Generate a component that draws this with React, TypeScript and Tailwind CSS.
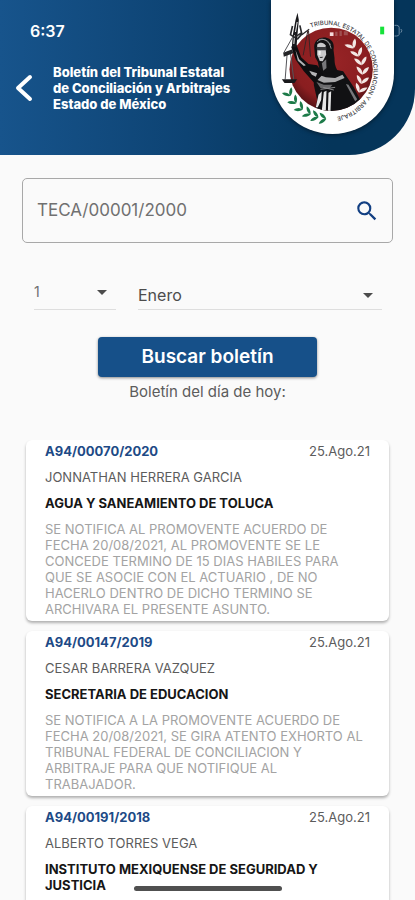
import React from 'react';
import { MdArrowDropDown, MdSearch } from 'react-icons/md';

type Notice = {
  file: string;
  date: string;
  person: string;
  entity: string;
  detail?: string;
};

const notices: Notice[] = [
  {
    file: 'A94/00070/2020',
    date: '25.Ago.21',
    person: 'JONNATHAN HERRERA GARCIA',
    entity: 'AGUA Y SANEAMIENTO DE TOLUCA',
    detail:
      'SE NOTIFICA AL PROMOVENTE ACUERDO DE FECHA 20/08/2021, AL PROMOVENTE SE LE CONCEDE TERMINO DE 15 DIAS HABILES PARA QUE SE ASOCIE CON EL ACTUARIO , DE NO HACERLO DENTRO DE DICHO TERMINO SE ARCHIVARA EL PRESENTE ASUNTO.',
  },
  {
    file: 'A94/00147/2019',
    date: '25.Ago.21',
    person: 'CESAR BARRERA VAZQUEZ',
    entity: 'SECRETARIA DE EDUCACION',
    detail:
      'SE NOTIFICA A LA PROMOVENTE ACUERDO DE FECHA 20/08/2021, SE GIRA ATENTO EXHORTO AL TRIBUNAL FEDERAL DE CONCILIACION Y ARBITRAJE PARA QUE NOTIFIQUE AL TRABAJADOR.',
  },
  {
    file: 'A94/00191/2018',
    date: '25.Ago.21',
    person: 'ALBERTO TORRES VEGA',
    entity: 'INSTITUTO MEXIQUENSE DE SEGURIDAD Y JUSTICIA',
  },
];

const months = ['Enero', 'Febrero', 'Marzo', 'Abril', 'Mayo', 'Junio', 'Julio', 'Agosto', 'Septiembre', 'Octubre', 'Noviembre', 'Diciembre'];
const days = Array.from({ length: 31 }, (_, i) => String(i + 1));

// One pair of laurel leaves around a stem point, growing along `turn` degrees.
function LeafPair({ x, y, turn, size = 1 }: { x: number; y: number; turn: number; size?: number }) {
  return (
    <g transform={`translate(${x} ${y}) rotate(${turn}) scale(${size})`}>
      <path d="M0 2C-2-7-10-14-19-15C-18-5-10 4 0 8Z" />
      <path d="M0 2C2-7 9-14 18-16C18-5 10 4 0 8Z" />
    </g>
  );
}

function Emblem() {
  return (
    <svg viewBox="48 0 368 402" className="h-full w-full overflow-visible" role="img" aria-label="Tribunal Estatal de Conciliación y Arbitraje">
      <defs>
        <path id="ring" d="M167 83A140 140 0 1 1 227 354" />
        <radialGradient id="disc" cx="0.5" cy="0.4" r="0.6">
          <stop offset="0" stopColor="#982426" />
          <stop offset="0.75" stopColor="#8a1e20" />
          <stop offset="1" stopColor="#541215" />
        </radialGradient>
        <clipPath id="discClip">
          <circle cx="228" cy="208" r="125" />
        </clipPath>
      </defs>
      <circle cx="228" cy="208" r="125" fill="url(#disc)" />
      <text fill="#3b3b3f" fontSize="18" fontFamily="Inter, sans-serif" fontWeight="500">
        <textPath href="#ring">TRIBUNAL ESTATAL DE CONCILIACION Y ARBITRAJE</textPath>
      </text>

      {/* torso and robe */}
      <g clipPath="url(#discClip)">
        <path d="M176 218L205 205L235 208L264 214L280 238L296 262L318 306L290 325L250 345H178L186 300L176 255Z" fill="#111113" />
        <path d="M184 222L212 232L240 234L262 224L268 234L240 246L206 248L182 238Z" fill="#a9a9ab" />
        <path d="M184 246L206 254L232 254L222 266L196 264Z" fill="#6a6a6c" />
        <path d="M190 284L200 274L198 300L188 322H182ZM206 276L214 272L212 330H200ZM220 278L228 274L226 335L218 340Z" fill="#e6e6e6" />
        <path d="M272 252L280 254L306 298L300 304Z" fill="#77777a" />
        <path d="M196 268L240 262M204 262L236 270" stroke="#8a8a8c" strokeWidth="3" />
      </g>
      {/* raised arm */}
      <path d="M108 140L124 134L138 172L160 192L186 196L204 222L178 250L146 214L122 180Z" fill="#0e0e10" />
      <path d="M121 150L132 178L152 196L146 198L128 182ZM162 212L186 220L182 230L170 224Z" fill="#b5b5b7" />
      {/* head and blindfold */}
      <path d="M177 140C178 118 198 109 216 114C234 120 238 134 235 150L238 174C238 190 240 198 246 210L216 220L192 208L188 186L180 172Z" fill="#111113" />
      <path d="M186 134C192 126 206 126 211 136L213 164L203 184L194 183L186 164Z" fill="#c9c9cb" />
      <path d="M184 141L213 141L214 151L186 151Z" fill="#3a3a3d" />
      <path d="M190 152L197 153L196 166L190 164Z" fill="#f1f1f1" />
      <path d="M193 171L204 170L201 174L195 174Z" fill="#3a3a3d" />
      <path d="M200 190L213 178L214 204L204 212Z" fill="#77777a" />
      <path d="M186 126C196 114 216 116 226 134M192 119C206 114 222 122 228 146" fill="none" stroke="#8f8f91" strokeWidth="3" />

      {/* sword and scales */}
      <path d="M127 38L131 60L127 104L124 142L110 142L113 104L121 60Z" fill="#19191c" />
      <path d="M126 66L121 96M118 106L116 132" stroke="#f4f4f4" strokeWidth="3" />
      <path d="M112 78L106 104L118 112L140 98M134 76L140 102L126 118" fill="none" stroke="#29292c" strokeWidth="5" />
      <path d="M140 104L162 88" stroke="#29292c" strokeWidth="4" />
      <path d="M112 112L86 158M96 160L90 238M106 160L116 240" fill="none" stroke="#55555a" strokeWidth="3" />
      <path d="M84 158L112 148L114 160L86 170Z" fill="#242427" />
      <path d="M160 92L166 170M158 92L144 166" fill="none" stroke="#3b2325" strokeWidth="3" />
      <path d="M80 238H126L118 249H88Z" fill="#19191c" />

      {/* laurel branches */}
      <g fill="#f3e8e4">
        <LeafPair x={292} y={138} turn={-30} />
        <LeafPair x={308} y={162} turn={-20} />
        <LeafPair x={318} y={188} turn={-8} />
        <LeafPair x={322} y={216} turn={4} />
        <LeafPair x={320} y={244} turn={14} />
        <LeafPair x={314} y={270} turn={24} />
      </g>
      <g fill="#1c7a48">
        <LeafPair x={102} y={282} turn={-30} size={0.9} />
        <LeafPair x={118} y={305} turn={-42} size={0.9} />
        <LeafPair x={137} y={325} turn={-52} size={0.9} />
        <LeafPair x={160} y={340} turn={-62} size={0.9} />
        <LeafPair x={183} y={350} turn={-74} size={0.9} />
        <LeafPair x={206} y={356} turn={-84} size={0.9} />
      </g>

      {/* signal and battery of the status bar */}
      <path d="M224 97H235V108H224Z" fill="#f6dada" />
      <path d="M240 95H247V108H240ZM253 92H260V108H253ZM266 94H278V106H266Z" fill="#b98a8a" opacity="0.45" />
      <rect x="375" y="80" width="12" height="23" fill="#16e23a" />
      <path d="M418 76H424Q431 76 432 82V103Q431 108 424 108H418M437 87Q443 92 437 98" fill="none" stroke="#6d8ba3" strokeWidth="3" />
    </svg>
  );
}

function NoticeCard({ notice, last }: { notice: Notice; last: boolean }) {
  return (
    <article
      className={`flex flex-col gap-[10px] rounded-md bg-white px-[19px] pt-[3px] pb-1 text-[13px] leading-4 shadow-[0_2px_3px_rgba(0,0,0,0.3)] ${last ? 'grow rounded-b-none' : 'shrink-0'}`}
    >
      <div className="flex justify-between">
        <h2 className="font-bold text-[#1d4a86]">{notice.file}</h2>
        <time className="text-[#5c5c5c]">{notice.date}</time>
      </div>
      <p className="text-[#5c5c5c]">{notice.person}</p>
      <p className="font-bold text-[#161616]">{notice.entity}</p>
      {notice.detail && <p className="pr-1 text-[#a3a3a3]">{notice.detail}</p>}
    </article>
  );
}

export default function App() {
  return (
    <div className="relative flex h-screen flex-col overflow-hidden bg-[#fafafa] font-[Inter,'Liberation_Sans',sans-serif]">
      <header className="flex h-[155px] shrink-0 justify-between rounded-br-[66px] bg-linear-to-r from-[#17548c] via-[#0d4373] via-45% to-[#05355a] to-80% pr-[21px] text-white">
        <div className="flex flex-col pt-[21px]">
          <time className="pl-[30px] text-base leading-5 font-semibold">6:37</time>
          <div className="flex items-center pt-[23px]">
            <button type="button" aria-label="Regresar" className="flex w-[53px] pl-[15px]">
              <svg viewBox="0 0 18 28" className="h-7 w-[18px]" fill="none" stroke="currentColor" strokeWidth="4" strokeLinecap="round" strokeLinejoin="round">
                <path d="M15 3L3 14L15 25" />
              </svg>
            </button>
            <h1 className="text-[13px] leading-4 font-extrabold">
              Boletín del Tribunal Estatal
              <br />
              de Conciliación y Arbitrajes
              <br />
              Estado de México
            </h1>
          </div>
        </div>
        <div className="h-[134px] w-[123px] shrink-0 rounded-b-full bg-white shadow-[0_1px_4px_rgba(0,0,0,0.5)]">
          <Emblem />
        </div>
      </header>

      <main className="flex min-h-0 grow flex-col pt-[23px]">
        <form className="flex shrink-0 flex-col px-[22px]" onSubmit={(e) => e.preventDefault()}>
          <div className="flex h-[65px] items-center rounded-[5px] border border-[#a8a8a8] pr-3 pl-[14px]">
            <input aria-label="Número de expediente" placeholder="TECA/00001/2000" className="min-w-0 grow bg-transparent text-[17px] text-[#707070] outline-none placeholder:text-[#707070]" />
            <button type="submit" aria-label="Buscar expediente">
              <MdSearch className="size-[26px] text-[#123f82]" />
            </button>
          </div>
          <div className="mt-[35px] flex gap-[22px] pr-[11px] pl-3">
            <div className="grid w-[82px] border-b border-[#dedede] *:col-start-1 *:row-start-1">
              <select aria-label="Día" defaultValue="1" className="h-[31px] appearance-none bg-transparent pb-1 text-sm text-[#707070] outline-none">
                {days.map((d) => (
                  <option key={d}>{d}</option>
                ))}
              </select>
              <MdArrowDropDown className="pointer-events-none mr-[2px] mb-1 size-6 self-center justify-self-end text-[#4c4c4c]" />
            </div>
            <div className="grid grow border-b border-[#dedede] *:col-start-1 *:row-start-1">
              <select aria-label="Mes" defaultValue="Enero" className="h-[31px] appearance-none bg-transparent pt-[2px] text-base text-[#4c4c4c] outline-none">
                {months.map((m) => (
                  <option key={m}>{m}</option>
                ))}
              </select>
              <MdArrowDropDown className="pointer-events-none mt-[2px] mr-[2px] size-6 self-center justify-self-end text-[#4c4c4c]" />
            </div>
          </div>
          <button type="submit" className="mt-[27px] h-10 w-[219px] self-center rounded-[4px] bg-[#165089] text-[19px] font-semibold text-white shadow-[0_1px_3px_rgba(0,0,0,0.45)]">
            Buscar boletín
          </button>
        </form>
        <p className="mt-[5px] shrink-0 text-center text-[15px] leading-5 text-[#5c5c5c]">Boletín del día de hoy:</p>

        <section aria-label="Boletín" className="mt-[38px] flex min-h-0 grow flex-col gap-[10px] overflow-hidden px-[26px]">
          {notices.map((n, i) => (
            <NoticeCard key={n.file} notice={n} last={i === notices.length - 1} />
          ))}
        </section>
      </main>

      <div className="absolute bottom-[9px] left-1/2 h-[5px] w-[148px] -translate-x-1/2 rounded-full bg-[#505050]" />
    </div>
  );
}
